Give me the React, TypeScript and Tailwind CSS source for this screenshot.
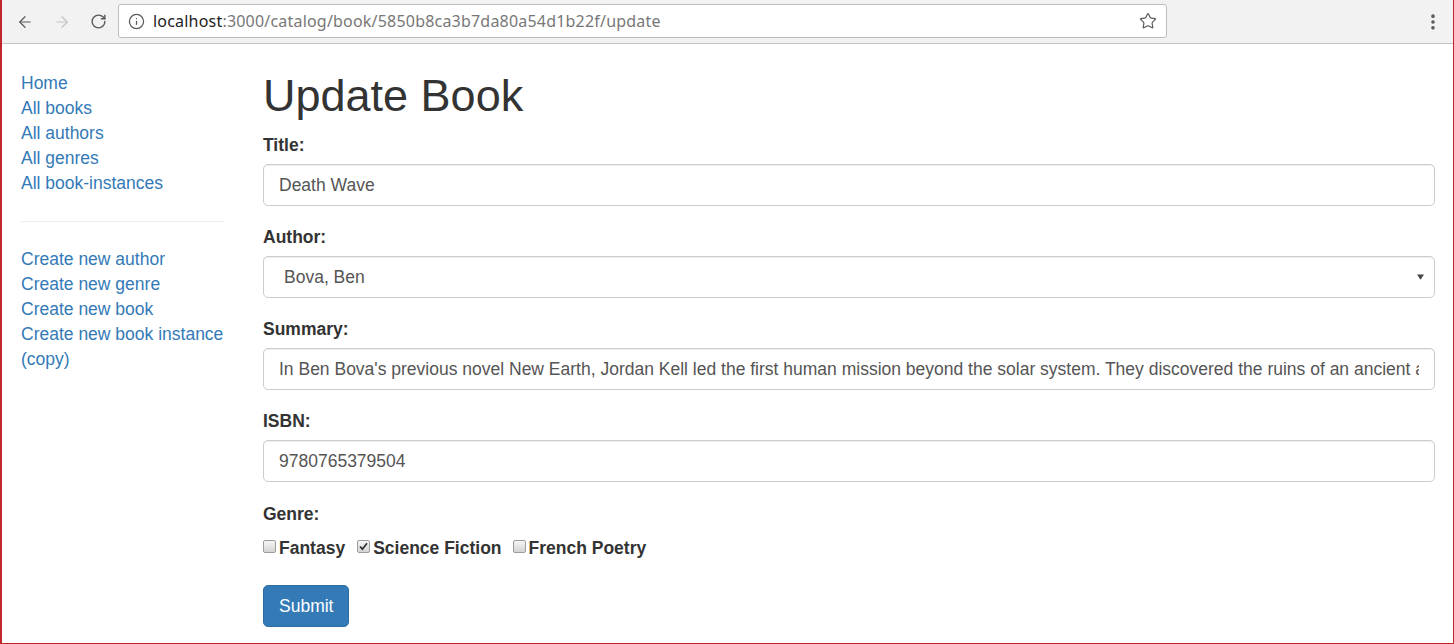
import { ArrowLeft, ArrowRight, RotateCw, Info, Star, EllipsisVertical } from "lucide-react";

const navTop = ["Home", "All books", "All authors", "All genres", "All book-instances"];
const navCreate = ["Create new author", "Create new genre", "Create new book", "Create new book instance (copy)"];

const summary =
  "In Ben Bova's previous novel New Earth, Jordan Kell led the first human mission beyond the solar system. They discovered the ruins of an ancient alien civilization. But one alien AI survived, and it revealed to Jordan Kell that an explosion in the black hole at the heart of the Milky Way galaxy has created a wave of deadly radiation, expanding out from the core toward Earth.";

function Checkbox({ checked }: { checked?: boolean }) {
  return (
    <span className="relative inline-block w-[13px] h-[13px] rounded-[2px] border border-[#9c9c9c] bg-gradient-to-b from-[#f6f6f6] to-[#d4d4d4] mr-[3px] -mt-[4px] shrink-0">
      {checked && (
        <svg viewBox="0 0 13 13" className="absolute -left-px -top-px w-[13px] h-[13px]">
          <path d="M3 6.5 L5.4 9.2 L10 3.2" fill="none" stroke="#333" strokeWidth="1.8" />
        </svg>
      )}
    </span>
  );
}

function Field({ label, value }: { label: string; value: string }) {
  return (
    <div className="mb-[19px]">
      <label className="block font-bold leading-[25px] mb-[6px]">{label}</label>
      <input
        readOnly
        value={value}
        className="block w-full h-[42px] px-[15px] border border-[#cccccc] rounded-[5px] text-[#555555] text-[17.5px] outline-none shadow-[inset_0_1px_1px_rgba(0,0,0,0.075)] bg-white font-['Liberation_Sans',Arial,sans-serif]"
      />
    </div>
  );
}

export default function App() {
  return (
    <div className="w-[1454px] h-[644px] flex flex-col overflow-hidden bg-white border-l-2 border-r border-b border-[#c0272d] font-['Liberation_Sans',Arial,sans-serif] text-[17.5px] text-[#333333]">
      {/* Browser toolbar */}
      <div className="h-[44px] shrink-0 flex items-center bg-[#f2f2f2] border-b border-[#c4c4c4]">
        <div className="flex items-center pl-[14px] gap-[19px] text-[#5a5a5a]">
          <ArrowLeft size={18} strokeWidth={1.6} />
          <ArrowRight size={18} strokeWidth={1.6} className="text-[#c4c4c4]" />
          <RotateCw size={17} strokeWidth={2} />
        </div>
        <div className="ml-[11px] w-[1049px] h-[34px] mt-[-1px] flex items-center bg-white border border-[#bdbdbd] rounded-[3px] pl-[9px] pr-[9px]">
          <Info size={17} strokeWidth={1.8} className="text-[#5a5a5a]" />
          <span className="ml-[8px] text-[16px] text-[#777777] font-['Noto_Sans',sans-serif] tracking-[0.2px]">
            <span className="text-[#222222]">localhost</span>:3000/catalog/book/5850b8ca3b7da80a54d1b22f/update
          </span>
          <Star size={18} strokeWidth={1.6} className="ml-auto text-[#5a5a5a]" />
        </div>
        <EllipsisVertical size={20} strokeWidth={2.4} className="ml-auto mr-[10px] text-[#5a5a5a]" />
      </div>

      <div className="flex flex-1">
        {/* Sidebar */}
        <div className="w-[261px] shrink-0 pl-[19px] pr-[39px] pt-[27px]">
          <ul className="leading-[25px] text-[#337ab7]">
            {navTop.map((n) => (
              <li key={n}>{n}</li>
            ))}
          </ul>
          <hr className="my-[25px] border-t border-[#eeeeee]" />
          <ul className="leading-[25px] text-[#337ab7]">
            {navCreate.map((n) => (
              <li key={n}>{n}</li>
            ))}
          </ul>
        </div>

        {/* Main */}
        <div className="flex-1 pr-[18px] pt-[27px]">
          <h1 className="text-[45px] leading-[50px] mb-[12px] font-normal">Update Book</h1>
          <Field label="Title:" value="Death Wave" />

          <div className="mb-[19px]">
            <label className="block font-bold leading-[25px] mb-[6px]">Author:</label>
            <div className="flex items-center h-[42px] pl-[20px] pr-[10px] border border-[#cccccc] rounded-[5px] text-[#555555] shadow-[inset_0_1px_1px_rgba(0,0,0,0.075)]">
              <span>Bova, Ben</span>
              <svg viewBox="0 0 8 6" className="ml-auto w-[7px] h-[6px]">
                <path d="M0 0 L8 0 L4 6 Z" fill="#444" />
              </svg>
            </div>
          </div>

          <Field label="Summary:" value={summary} />
          <Field label="ISBN:" value="9780765379504" />

          <div className="mb-[24px] pt-[1px]">
            <label className="block font-bold leading-[25px] mb-[9px]">Genre:</label>
            <div className="flex items-center h-[25px] font-bold">
              <Checkbox />
              <span className="mr-[12px]">Fantasy</span>
              <Checkbox checked />
              <span className="mr-[11px]">Science Fiction</span>
              <Checkbox />
              <span>French Poetry</span>
            </div>
          </div>

          <button className="h-[42px] px-[15px] rounded-[5px] bg-[#337ab7] border border-[#2e6da4] text-white text-[17.5px]">
            Submit
          </button>
        </div>
      </div>
    </div>
  );
}
